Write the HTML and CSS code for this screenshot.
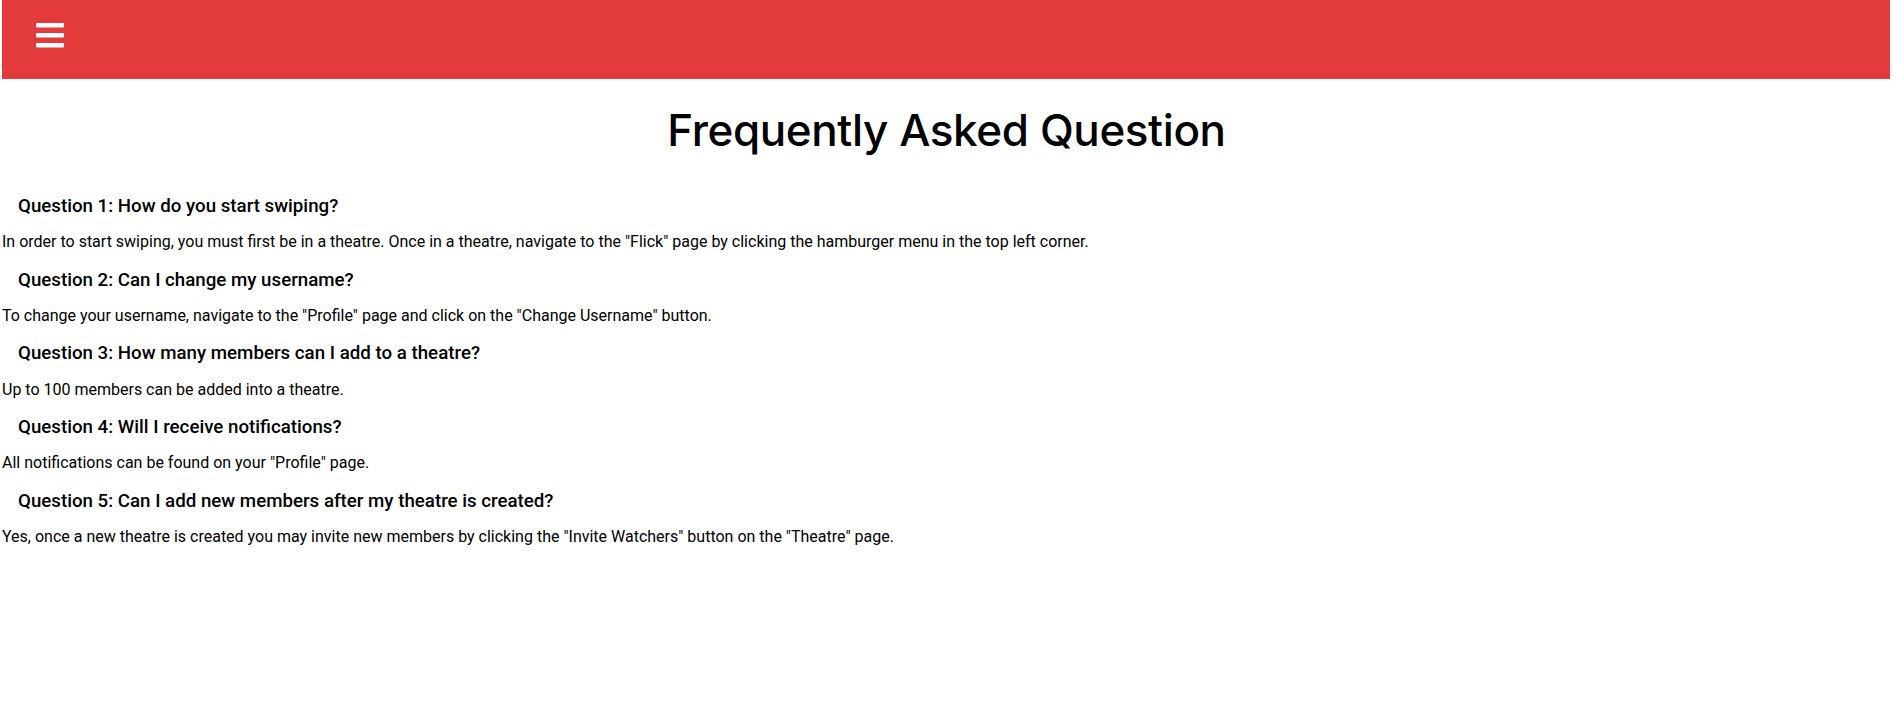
FILE: index.html
```html
<!DOCTYPE html>
<html lang="en">
<head>
<meta charset="utf-8">
<title>FAQ</title>
<link rel="stylesheet" href="styles.css">
</head>
<body>
<header class="topbar">
  <button class="menu-btn" aria-label="Menu">
    <svg width="28" height="25" viewBox="0 0 28 25" aria-hidden="true">
      <rect x="0" y="0" width="28" height="4.4" rx="0.8" fill="#fff"/>
      <rect x="0" y="10" width="28" height="4.4" rx="0.8" fill="#fff"/>
      <rect x="0" y="20" width="28" height="4.4" rx="0.8" fill="#fff"/>
    </svg>
  </button>
</header>
<main class="faq">
  <h1 class="faq-title">Frequently Asked Question</h1>
  <section class="faq-item">
    <h3 class="faq-q">Question 1: How do you start swiping?</h3>
    <p class="faq-a">In order to start swiping, you must first be in a theatre. Once in a theatre, navigate to the "Flick" page by clicking the hamburger menu in the top left corner.</p>
  </section>
  <section class="faq-item">
    <h3 class="faq-q">Question 2: Can I change my username?</h3>
    <p class="faq-a">To change your username, navigate to the "Profile" page and click on the "Change Username" button.</p>
  </section>
  <section class="faq-item">
    <h3 class="faq-q">Question 3: How many members can I add to a theatre?</h3>
    <p class="faq-a">Up to 100 members can be added into a theatre.</p>
  </section>
  <section class="faq-item">
    <h3 class="faq-q">Question 4: Will I receive notifications?</h3>
    <p class="faq-a">All notifications can be found on your "Profile" page.</p>
  </section>
  <section class="faq-item">
    <h3 class="faq-q">Question 5: Can I add new members after my theatre is created?</h3>
    <p class="faq-a">Yes, once a new theatre is created you may invite new members by clicking the "Invite Watchers" button on the "Theatre" page.</p>
  </section>
</main>
</body>
</html>
```
FILE: styles.css
```css
html, body {
  margin: 0;
  padding: 0;
  background: #fff;
}
body {
  font-family: Roboto, "Liberation Sans", sans-serif;
  color: #000;
}
.topbar {
  height: 79px;
  margin: 0 3px 0 2px;
  background: #e33b3c;
  display: flex;
  align-items: flex-start;
  padding-left: 34px;
  box-sizing: border-box;
}
.menu-btn {
  border: 0;
  background: none;
  padding: 0;
  margin-top: 23px;
  width: 28px;
  height: 25px;
  display: block;
  cursor: pointer;
}
.menu-btn svg { display: block; }
.faq {
  padding: 0 2px;
}
.faq-title {
  font-family: Inter, "Noto Sans", sans-serif;
  font-weight: 500;
  font-size: 44px;
  line-height: 53px;
  letter-spacing: -0.4px;
  text-align: center;
  margin: 25px 0 38px;
}
.faq-item {
  display: flex;
  flex-direction: column;
}
.faq-q {
  font-size: 18.72px;
  font-weight: 500;
  line-height: 22px;
  margin: 0 0 0 16px;
}
.faq-a {
  font-size: 16px;
  line-height: 19px;
  margin: 15.2px 0 17.5px;
}
```
